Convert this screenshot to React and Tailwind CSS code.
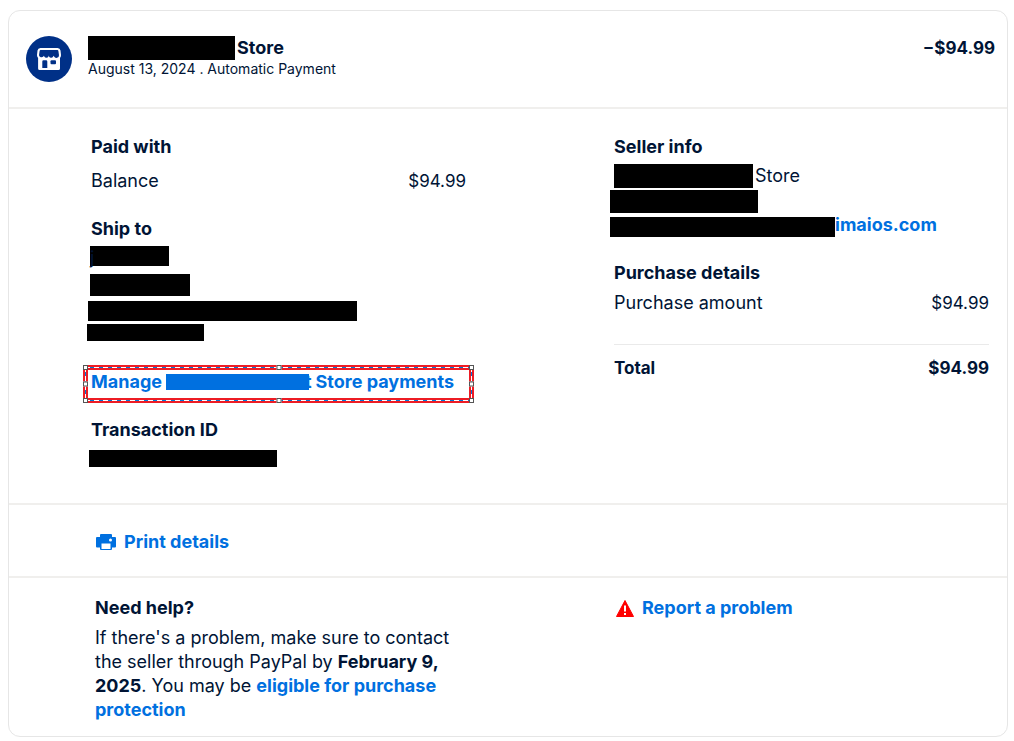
const redacted = "block bg-black";

const handles = [
  "left-0 top-0",
  "left-1/2 top-0 -translate-x-1/2",
  "right-0 top-0",
  "left-0 top-1/2 -translate-y-1/2",
  "right-0 top-1/2 -translate-y-1/2",
  "bottom-0 left-0",
  "bottom-0 left-1/2 -translate-x-1/2",
  "bottom-0 right-0",
];

function StoreIcon() {
  return (
    <svg viewBox="0 0 46 46" className="size-[46px] shrink-0" aria-hidden="true">
      <circle cx="23" cy="23" r="23" fill="#003087" />
      <path
        fill="#fff"
        d="M14.5 12h17a3 3 0 0 1 3 2.500l.5 4.500a4 4 0 0 1-1 3V32.500a1.600 1.600 0 0 1-1.600 1.600H13.700a1.600 1.600 0 0 1-1.600-1.600V22a4 4 0 0 1-1.100-3l.5-4.500a3 3 0 0 1 3-2.500z"
      />
      <path
        fill="#003087"
        d="M14.600 14h16.800a1 1 0 0 1 1 .9l.6 4.300a2.600 2.600 0 0 1-4.900 1.300l-.4-.8-.5.900a2.400 2.400 0 0 1-4.200 0L23 19.400l-.5 1.200a2.400 2.400 0 0 1-4.200 0l-.5-.9-.4.800a2.600 2.600 0 0 1-4.400-1.300l.6-4.300a1 1 0 0 1 1-.9z"
      />
      <path
        fill="#003087"
        d="M17.500 24.200h2.600a1.200 1.200 0 0 1 1.200 1.200V32h-5v-6.600a1.200 1.200 0 0 1 1.200-1.200z"
      />
      <rect x="24.500" y="24.200" width="5.500" height="4" rx="1" fill="#003087" />
    </svg>
  );
}

function PrinterIcon() {
  return (
    <svg viewBox="0 0 20 16" className="h-4 w-5 shrink-0" aria-hidden="true">
      <path
        fill="#0070e0"
        fillRule="evenodd"
        d="M4 1a1 1 0 0 1 1-1h10a1 1 0 0 1 1 1v2h3a1 1 0 0 1 1 1v8.500a1 1 0 0 1-1 1h-3V15a1 1 0 0 1-1 1H5a1 1 0 0 1-1-1v-1.500H1a1 1 0 0 1-1-1V4a1 1 0 0 1 1-1h3zM5.500 9.500V15h9V9.500zM14.500 4.500a1.500 1.500 0 1 0 0 3 1.500 1.500 0 0 0 0-3z"
      />
    </svg>
  );
}

function WarningIcon() {
  return (
    <svg viewBox="0 0 18 17" className="h-[17px] w-[18px] shrink-0" aria-hidden="true">
      <path d="M9 0.500 17.500 16.500H0.500z" fill="#f00" stroke="#f00" strokeLinejoin="round" />
      <path d="M8 5.500h2v6H8zM8 13h2v2H8z" fill="#fff" />
    </svg>
  );
}

function Amount({ label, value, className = "" }) {
  return (
    <p className={`flex justify-between ${className}`}>
      <span>{label}</span>
      <span className="text-[17px]">{value}</span>
    </p>
  );
}

function SelectionFrame() {
  return (
    <span className="pointer-events-none absolute -inset-x-2 -top-[5px] -bottom-[9px] border-2 border-[#ed1c24]">
      <span className="absolute inset-x-0 top-0 h-px bg-[repeating-linear-gradient(90deg,#fff_0_5px,#0078d7_5px_9px)]" />
      <span className="absolute inset-x-0 bottom-0 h-px bg-[repeating-linear-gradient(90deg,#fff_0_5px,#0078d7_5px_9px)]" />
      <span className="absolute inset-y-0 left-0 w-px bg-[repeating-linear-gradient(#fff_0_5px,#0078d7_5px_9px)]" />
      <span className="absolute inset-y-0 right-0 w-px bg-[repeating-linear-gradient(#fff_0_5px,#0078d7_5px_9px)]" />
      <span className="absolute inset-px border-2 border-[#ed1c24]" />
      <span className="absolute -inset-[2px]">
        {handles.map((place) => (
          <span key={place} className={`absolute size-[5px] border border-[#555] bg-white ${place}`} />
        ))}
      </span>
    </span>
  );
}

function App() {
  return (
    <main className="bg-white px-2 pt-[10px] pb-1 pr-[6px] font-['Inter','Liberation_Sans',sans-serif] text-lg leading-6 text-[#001435]">
      <article className="rounded-xl border border-[#e6e6e6]">
        <header className="flex h-[98px] items-start border-b-2 border-[#f0efed] pt-[25px] pr-3 pl-[17px]">
          <StoreIcon />
          <div className="ml-4">
            <h1 className="flex gap-[2px] leading-6 font-bold">
              <span className={`${redacted} h-6 w-[147px]`} />
              Store
            </h1>
            <p className="text-sm leading-[18px]">August 13, 2024 . Automatic Payment</p>
          </div>
          <p className="ml-auto text-[17px] leading-6 font-bold">−$94.99</p>
        </header>

        <section className="grid grid-cols-2 gap-[148px] border-b-2 border-[#f0efed] pt-[26px] pr-[18px] pb-9 pl-[82px]">
          <div>
            <h2 className="font-bold">Paid with</h2>
            <Amount label="Balance" value="$94.99" className="mt-[10px]" />

            <h2 className="mt-6 font-bold">Ship to</h2>
            <div className="mt-[5px] -ml-1">
              <span className={`${redacted} ml-[3px] h-5 w-[79px]`}>j</span>
              <span className={`${redacted} mt-2 ml-[3px] h-[22px] w-[100px]`} />
              <span className={`${redacted} mt-[5px] ml-px h-5 w-[269px]`} />
              <span className={`${redacted} mt-[3px] h-[17px] w-[117px]`} />
            </div>

            <div className="relative mt-[29px]">
              <a href="#manage" className="flex items-center font-bold whitespace-nowrap text-[#0070e0]">
                Manage
                <span className="z-10 ml-1 h-4 w-[143px] bg-[#0070e0]" />
                <span className="-ml-1">t</span>
                <span className="ml-1">Store payments</span>
              </a>
              <SelectionFrame />
            </div>

            <h2 className="mt-6 font-bold">Transaction ID</h2>
            <span className={`${redacted} mt-2 -ml-[2px] h-[17px] w-[188px]`} />
          </div>

          <div>
            <h2 className="font-bold">Seller info</h2>
            <p className="mt-[5px] flex gap-[2px]">
              <span className={`${redacted} h-6 w-[139px]`} />
              Store
            </p>
            <div className="-ml-1">
              <span className={`${redacted} mt-[2px] h-[23px] w-[148px]`} />
              <p className="flex items-end">
                <span className={`${redacted} h-5 w-[225px]`} />
                <a href="#seller" className="font-bold text-[#0070e0]">
                  imaios.com
                </a>
              </p>
            </div>

            <h2 className="mt-6 font-bold">Purchase details</h2>
            <Amount label="Purchase amount" value="$94.99" className="mt-[6px]" />
            <hr className="mt-[29px] border-[#eaeaea]" />
            <Amount label="Total" value="$94.99" className="mt-[11px] text-[17px] font-bold" />
          </div>
        </section>

        <section className="border-b-2 border-[#f0efed] pt-[25px] pb-[22px] pl-[87px]">
          <a href="#print" className="flex w-fit items-center gap-2 font-bold text-[#0070e0]">
            <PrinterIcon />
            Print details
          </a>
        </section>

        <section className="grid grid-cols-2 gap-[148px] pt-[18px] pr-[18px] pb-[14px] pl-[86px]">
          <div>
            <h2 className="font-bold">Need help?</h2>
            <p className="mt-[6px] pr-4">
              If there's a problem, make sure to contact the seller through PayPal by{" "}
              <strong className="font-bold">February 9, 2025</strong>. You may be{" "}
              <a href="#protection" className="font-bold text-[#0070e0]">
                eligible for purchase protection
              </a>
            </p>
          </div>
          <div>
            <a href="#report" className="flex w-fit items-center gap-2 font-bold text-[#0070e0]">
              <WarningIcon />
              Report a problem
            </a>
          </div>
        </section>
      </article>
    </main>
  );
}

export default App;
